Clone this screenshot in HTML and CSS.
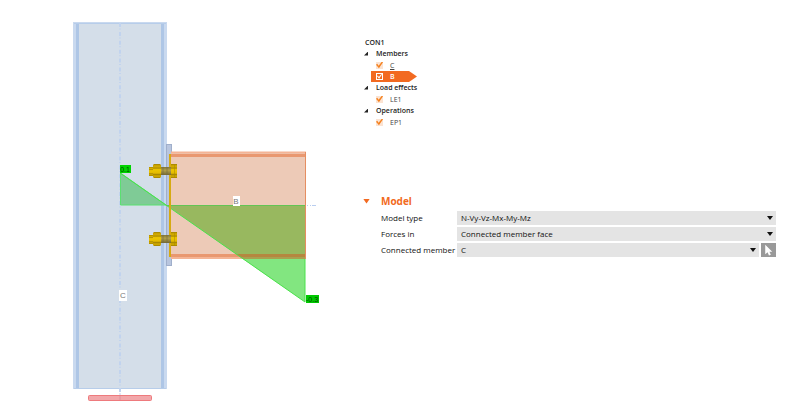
FILE: index.html
```html
<!DOCTYPE html>
<html lang="en">
<head>
<meta charset="utf-8">
<title>CON1</title>
<link rel="stylesheet" href="styles.css">
</head>
<body>
<main class="workspace">
  <svg class="scene" viewBox="0 0 340 420" role="img" aria-label="Connection of members C and B">
    <defs>
      <linearGradient id="brass" x1="0" y1="0" x2="0" y2="1">
        <stop offset="0" stop-color="#9e8000"/>
        <stop offset=".15" stop-color="#d9b000"/>
        <stop offset=".3" stop-color="#b29000"/>
        <stop offset=".4" stop-color="#edc600"/>
        <stop offset=".65" stop-color="#e4bb00"/>
        <stop offset=".75" stop-color="#a98900"/>
        <stop offset=".87" stop-color="#d6ae00"/>
        <stop offset="1" stop-color="#9b7d00"/>
      </linearGradient>
      <linearGradient id="shank" x1="0" y1="0" x2="0" y2="1">
        <stop offset="0" stop-color="#82763a"/>
        <stop offset=".4" stop-color="#b3a14a"/>
        <stop offset="1" stop-color="#756a35"/>
      </linearGradient>
      <g id="bolt">
        <rect x="0" y="-4" width="5" height="9" fill="url(#brass)"/>
        <rect x="12" y="-4" width="10" height="8" fill="url(#shank)"/>
        <path d="M14 -4v8M18 -4v8" stroke="#716b45" stroke-width="1" opacity=".6"/>
        <path d="M5 -7H11L12 -6V6L11 7H5L4 6V-6Z" fill="url(#brass)"/>
        <path d="M22 -7H28V7H22Z" fill="url(#brass)"/>
        <path d="M25.500 -6V7" stroke="#a98a00" stroke-width="1" opacity=".5"/>
      </g>
    </defs>

    <rect x="73" y="22" width="94" height="367" fill="#c9d9ef"/>
    <rect x="79" y="24" width="82" height="364" fill="#d4dee9"/>
    <path d="M77.500 23V388M162.500 23V388" stroke="#aec6e6" stroke-width="3"/>
    <path d="M74 23.500H166M74 388.500H166" stroke="#b7cdea" stroke-width="1"/>
    <path d="M120 23V400" stroke="#c1d3ee" stroke-width="2" stroke-dasharray="4 1.500 1 2.400"/>

    <rect x="166.500" y="144.500" width="5" height="121" fill="#b9c6df" stroke="#a0afcb" stroke-width="1"/>

    <rect x="171" y="152" width="135" height="107" fill="#edcab7"/>
    <path d="M171 152.500H306M171 258H306" stroke="#f4b495" stroke-width="2"/>
    <path d="M171 155.500H306M171 255.500H306" stroke="#e99870" stroke-width="3"/>

    <path d="M120.500 173V205H166Z" fill="#7fcb96" stroke="#5be071" stroke-width="1"/>
    <path d="M166 205H305V254H236Z" fill="#98b85f"/>
    <path d="M236 254H305V257H240Z" fill="#b5873f"/>
    <path d="M240 257H305V259H243Z" fill="#a9a050"/>
    <path d="M243 259H305V302Z" fill="#82e680"/>
    <path d="M166 205.500H305" stroke="#63c454" stroke-width="1"/>
    <path d="M120 173L305 302V259" fill="none" stroke="#4be24c" stroke-width="1"/>
    <path d="M305.500 152V259" stroke="#e58e61" stroke-width="1"/>
    <path d="M307 205.500H316" stroke="#b9cef0" stroke-width="1" stroke-dasharray="1 2 1 1 4"/>

    <path d="M170 154V257" stroke="#d6aa12" stroke-width="2"/>
    <use href="#bolt" x="149" y="171"/>
    <use href="#bolt" x="149" y="239"/>

    <rect x="120" y="165" width="11" height="8" fill="#00d400"/>
    <text class="value" x="125" y="172">0.1</text>
    <rect x="306" y="295" width="13" height="8" fill="#00c800"/>
    <text class="value" x="312" y="302">-0.3</text>

    <rect x="233" y="196" width="7" height="10" fill="#fff"/>
    <text class="tag" x="236" y="204">B</text>
    <rect x="119" y="290" width="8" height="11" fill="#fff"/>
    <text class="tag" x="123" y="298">C</text>

    <rect x="88.500" y="395.500" width="63" height="5" rx="1" fill="#f2a7aa" stroke="#ee7a7d" stroke-width="1"/>
    <path d="M120 396V400" stroke="#dd929c" stroke-width="1"/>
  </svg>

  <div class="panel">
    <nav class="tree" aria-label="Connection items">
      <h1 class="tree-title">CON1</h1>
      <h2 class="group"><span class="fold"></span>Members</h2>
      <label class="item"><input class="check" type="checkbox" checked><span class="underlined">C</span></label>
      <label class="item item-active"><input class="check" type="checkbox" checked><span>B</span></label>
      <h2 class="group"><span class="fold"></span>Load effects</h2>
      <label class="item"><input class="check" type="checkbox" checked><span>LE1</span></label>
      <h2 class="group"><span class="fold"></span>Operations</h2>
      <label class="item"><input class="check" type="checkbox" checked><span>EP1</span></label>
    </nav>

    <form class="properties">
      <h2 class="section"><span class="section-fold"></span>Model</h2>
      <div class="row">
        <label for="model-type">Model type</label>
        <div class="dropdown"><select id="model-type"><option>N-Vy-Vz-Mx-My-Mz</option></select><span class="arrow"></span></div>
      </div>
      <div class="row">
        <label for="forces-in">Forces in</label>
        <div class="dropdown"><select id="forces-in"><option>Connected member face</option></select><span class="arrow"></span></div>
      </div>
      <div class="row">
        <label for="connected">Connected member</label>
        <div class="picker">
          <div class="dropdown"><select id="connected"><option>C</option></select><span class="arrow"></span></div>
          <button class="pick" type="button" aria-label="Pick member">
            <svg viewBox="0 0 15 15"><path d="M4 2V12L6.500 10L8 13.500L10 12.500L8.500 9.500H11.500Z" fill="#fff"/></svg>
          </button>
        </div>
      </div>
    </form>
  </div>
</main>
</body>
</html>
```

FILE: styles.css
```css
* {
  box-sizing: border-box;
}

body {
  margin: 0;
  background: #fff;
  color: #111;
  font-family: "Open Sans", "Noto Sans", sans-serif;
}

.workspace {
  display: grid;
  grid-template-columns: 340fr 460fr;
  align-items: start;
}

.scene {
  display: block;
  width: 100%;
}

.value,
.tag {
  font-family: "Liberation Sans", sans-serif;
  text-anchor: middle;
}

.value {
  font-size: 7px;
  fill: #004d00;
}

.tag {
  font-size: 8px;
  fill: #777;
}

.panel {
  padding: 36px 24px 0 22px;
}

.tree {
  font-size: 7px;
}

.tree-title,
.group {
  display: flex;
  align-items: center;
  height: 12px;
  margin: 0;
  color: #222;
  font-size: 7px;
  font-weight: 600;
}

.group {
  padding-bottom: 1px;
}

.tree-title {
  padding-left: 3px;
}

.fold {
  width: 4px;
  height: 4px;
  margin: 0 8px 0 2px;
  background: #222;
  clip-path: polygon(100% 0, 100% 100%, 0 100%);
}

.item {
  display: flex;
  align-items: center;
  gap: 7px;
  width: 55px;
  height: 11px;
  padding: 0 0 1px 14px;
  color: #444;
}

.item-active {
  margin-left: 9px;
  width: 46px;
  padding: 0 0 0 5px;
  background: #f26a21;
  color: #fff;
  font-weight: 600;
  clip-path: polygon(0 0, 38px 0, 100% 50%, 38px 100%, 0 100%);
}

.underlined {
  text-decoration: underline;
}

.check {
  appearance: none;
  display: grid;
  width: 7px;
  height: 7px;
  margin: 0;
  background: #fbe3d2;
}

.check::before {
  content: "";
  background: #f58220;
  clip-path: polygon(0 45%, 18% 32%, 38% 60%, 85% 0, 100% 12%, 42% 95%);
}

.item-active .check {
  background: #f26a21;
  border: 1px solid #fff;
}

.item-active .check::before {
  background: #fff;
}

.properties {
  padding-top: 66px;
  font-size: 8px;
}

.section {
  display: flex;
  align-items: center;
  height: 14px;
  margin: 0 0 2px;
  color: #f26a21;
  font-size: 10px;
  font-weight: 700;
}

.section-fold {
  width: 7px;
  height: 5px;
  margin: 0 11px 0 1px;
  background: #f26a21;
  clip-path: polygon(0 0, 100% 0, 50% 100%);
}

.row {
  display: grid;
  grid-template-columns: 76px 1fr;
  align-items: center;
  height: 16px;
  padding-left: 19px;
  white-space: nowrap;
}

.row label {
  padding-bottom: 2px;
}

.dropdown {
  display: grid;
  align-items: center;
  flex: 1;
}

.dropdown select,
.arrow {
  grid-area: 1 / 1;
}

.dropdown select {
  appearance: none;
  width: 100%;
  height: 14px;
  padding: 0 4px 2px;
  border: 0;
  border-radius: 0;
  background: #e4e4e4;
  color: #111;
  font: inherit;
}

.arrow {
  justify-self: end;
  width: 6px;
  height: 4px;
  margin-right: 3px;
  background: #111;
  clip-path: polygon(0 0, 100% 0, 50% 100%);
  pointer-events: none;
}

.picker {
  display: flex;
  gap: 2px;
}

.pick {
  width: 15px;
  height: 14px;
  padding: 0;
  border: 0;
  background: #999;
}

.pick svg {
  display: block;
  width: 100%;
  height: 100%;
}
```
